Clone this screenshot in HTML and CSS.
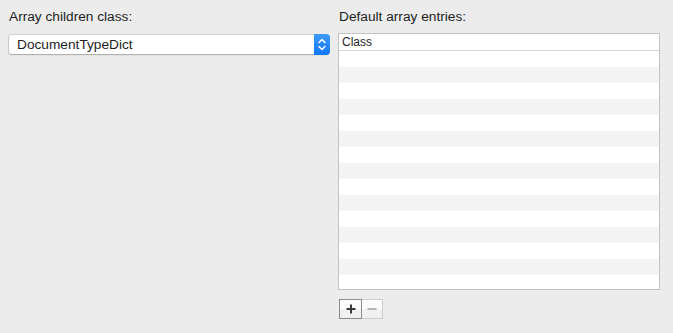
FILE: index.html
```html
<!DOCTYPE html>
<html>
<head>
<meta charset="utf-8">
<link rel="stylesheet" href="styles.css">
</head>
<body>
<div class="page">
  <div class="col">
    <div class="label">Array children class:</div>
    <div class="popup">
      <span class="popup-text">DocumentTypeDict</span>
      <span class="stepper">
        <svg width="16" height="21" viewBox="0 0 16 21">
          <path d="M5 8.5 L8 5.5 L11 8.5" fill="none" stroke="#fff" stroke-width="1.5" stroke-linecap="round" stroke-linejoin="round"/>
          <path d="M5 12.5 L8 15.5 L11 12.5" fill="none" stroke="#fff" stroke-width="1.5" stroke-linecap="round" stroke-linejoin="round"/>
        </svg>
      </span>
    </div>
  </div>
  <div class="col col-right">
    <div class="label">Default array entries:</div>
    <div class="table">
      <div class="thead">Class</div>
      <div class="rows"></div>
    </div>
    <div class="buttons">
      <div class="btn btn-add">
        <svg width="10" height="10" viewBox="0 0 10 10"><path d="M5 0.5V9.5M0.5 5H9.5" stroke="#3a3a3a" stroke-width="2"/></svg>
      </div>
      <div class="btn btn-remove">
        <svg width="10" height="10" viewBox="0 0 10 10"><path d="M0.5 5H9.5" stroke="#b4b4b4" stroke-width="2"/></svg>
      </div>
    </div>
  </div>
</div>
</body>
</html>
```

FILE: styles.css
```css
html, body {
  margin: 0;
  padding: 0;
  background: #ececec;
}
body {
  width: 673px;
  height: 333px;
  overflow: hidden;
  font-family: "Liberation Sans", Arial, sans-serif;
  color: #1e1e1e;
}
.page {
  display: flex;
  gap: 8px;
  padding: 9px 0 0 8px;
}
.col {
  width: 322px;
  display: flex;
  flex-direction: column;
}
.label {
  font-size: 13.7px;
  line-height: 16px;
  height: 16px;
  padding-left: 1px;
  margin-bottom: 9px;
}
.col-right .label {
  margin-bottom: 8px;
}
.popup {
  height: 21px;
  box-sizing: border-box;
  border: 1px solid #c6c6c6;
  border-top-color: #cfcfcf;
  border-bottom-color: #b0b0b0;
  border-radius: 4px;
  background: #fff;
  display: flex;
  align-items: center;
  position: relative;
  box-shadow: 0 0.5px 0.5px rgba(0,0,0,0.08);
}
.popup-text {
  flex: 1;
  font-size: 13.7px;
  padding-left: 8px;
  color: #1e1e1e;
}
.stepper {
  width: 16px;
  height: 21px;
  margin: -1px -1px -1px 0;
  border-radius: 0 4px 4px 0;
  background: linear-gradient(#3f9cfc, #1177fa);
  display: flex;
}
.table {
  height: 257px;
  box-sizing: border-box;
  border: 1px solid #c3c3c3;
  background: #fff;
  overflow: hidden;
}
.thead {
  height: 17px;
  box-sizing: border-box;
  border-bottom: 1px solid #d4d4d4;
  font-size: 12px;
  line-height: 16px;
  padding-left: 3px;
  color: #1e1e1e;
}
.rows {
  height: 238px;
  background: repeating-linear-gradient(#fff 0, #fff 16px, #f4f4f4 16px, #f4f4f4 32px);
}
.buttons {
  display: flex;
  margin-top: 9px;
  margin-left: 1px;
}
.btn {
  width: 22px;
  height: 20px;
  box-sizing: border-box;
  display: flex;
  align-items: center;
  justify-content: center;
  background: linear-gradient(#fbfbfb 0, #fbfbfb 50%, #f1f1f1 50%, #f1f1f1 100%);
}
.btn-add {
  border: 1px solid #8c8c8c;
  width: 23px;
}
.btn-remove {
  border: 1px solid #cdcdcd;
  border-left: none;
  width: 21px;
}
```
